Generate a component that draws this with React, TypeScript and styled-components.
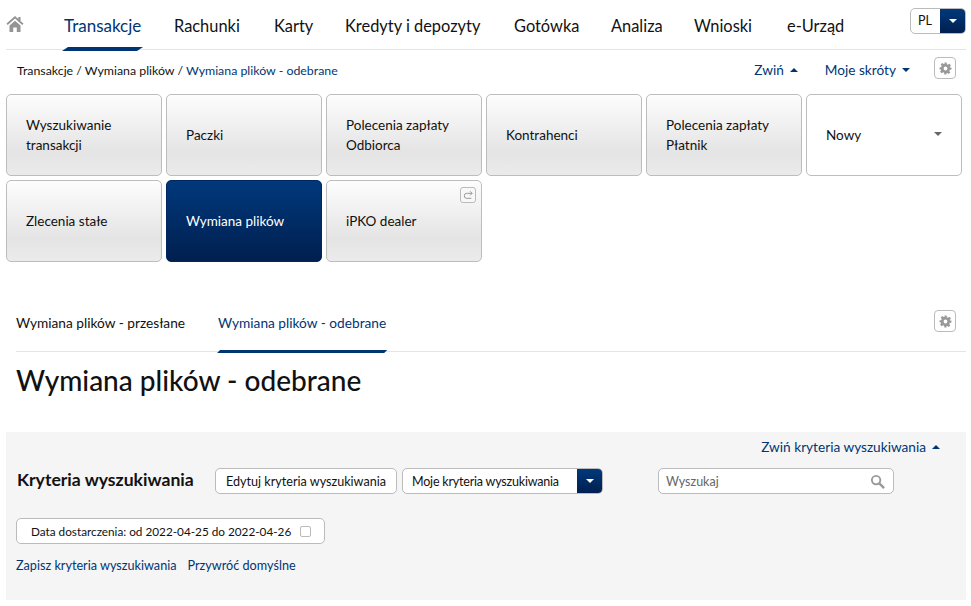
import React from "react";
import styled, { createGlobalStyle } from "styled-components";

const Global = createGlobalStyle`
  html, body { margin: 0; padding: 0; background: #fff; }
  body { font-family: "Lato", "Open Sans", sans-serif; color: #111; overflow: hidden; }
  * { box-sizing: border-box; }
`;

const blue = "#003574";
const navy = "linear-gradient(#00397c, #001f4f)";

const Page = styled.div`
  width: 971px;
  height: 606px;
  padding: 0 5px 0 6px;
  overflow: hidden;
`;
const TopBar = styled.header`
  height: 50px;
  display: flex;
  border-bottom: 1px solid #e5e5e5;
  position: relative;
`;
const HomeLink = styled.div`
  width: 58px;
  padding-top: 15px;
  color: #949494;
`;
const Nav = styled.nav`
  display: flex;
  gap: 33px;
  flex: 1;
`;
const NavItem = styled.a<{ $active?: boolean; $w: number }>`
  position: relative;
  width: ${(p) => p.$w}px;
  font-size: ${(p) => (p.$active ? 17 : 16.4)}px;
  line-height: 20px;
  padding-top: 16px;
  height: 50px;
  color: ${(p) => (p.$active ? blue : "#111")};
  white-space: nowrap;
  ${(p) =>
    p.$active &&
    `&::after{content:"";position:absolute;left:-2px;right:-2px;bottom:-1px;height:4px;background:${blue};clip-path:polygon(6px 0,100% 0,calc(100% - 6px) 100%,0 100%);}`}
`;
const LangBox = styled.div`
  position: absolute;
  right: 0;
  top: 8px;
  width: 56px;
  height: 26px;
  border: 1px solid #bbb;
  border-radius: 5px;
  display: flex;
  overflow: hidden;
  font-size: 12.5px;
`;
const LangValue = styled.span`
  flex: 1;
  padding-left: 7px;
  line-height: 24px;
`;
const Drop = styled.span<{ $w: number }>`
  width: ${(p) => p.$w}px;
  background: ${navy};
  display: flex;
  align-items: center;
  justify-content: center;
  flex: none;
  &::after {
    content: "";
    border: 4px solid transparent;
    border-top: 4px solid #fff;
    border-bottom: 0;
  }
`;
const CrumbRow = styled.div`
  height: 44px;
  display: flex;
  align-items: center;
  padding: 0 10px 4px 11px;
  font-size: 12.35px;
`;
const Crumbs = styled.div`
  flex: 1;
`;
const CrumbCurrent = styled.span`
  color: ${blue};
`;
const Toggle = styled.a<{ $gap?: number }>`
  color: ${blue};
  font-size: 13.65px;
  display: inline-flex;
  align-items: center;
  gap: 6px;
  margin-right: ${(p) => p.$gap ?? 0}px;
  white-space: nowrap;
`;
const Caret = styled.span<{ $up?: boolean }>`
  width: 0;
  height: 0;
  border: 4px solid transparent;
  ${(p) => (p.$up ? `border-bottom: 4px solid ${blue}; border-top: 0;` : `border-top: 4px solid ${blue}; border-bottom: 0;`)}
`;
const GearButton = styled.span`
  width: 22px;
  height: 22px;
  border: 1px solid #bbb;
  border-radius: 4px;
  display: flex;
  align-items: center;
  justify-content: center;
  color: #999;
  margin-top: -4px;
`;
const Tiles = styled.div`
  display: grid;
  grid-template-columns: repeat(6, 156px);
  grid-auto-rows: 82px;
  gap: 4px;
`;
const Tile = styled.a<{ $variant?: "active" | "plain" }>`
  position: relative;
  border: 1px solid ${(p) => (p.$variant === "active" ? "#00275f" : "#bdbdbd")};
  border-radius: 5px;
  padding: 0 19px;
  display: flex;
  align-items: center;
  font-size: 13.5px;
  line-height: 20px;
  color: ${(p) => (p.$variant === "active" ? "#fff" : "#111")};
  background: ${(p) =>
    p.$variant === "active"
      ? navy
      : p.$variant === "plain"
      ? "#fff"
      : "linear-gradient(#fdfdfd, #e4e4e4 72%, #ebebeb)"};
`;
const TileCaret = styled.span`
  position: absolute;
  right: 19px;
  top: 37px;
  border: 4px solid transparent;
  border-top: 4px solid #666;
  border-bottom: 0;
`;
const ExternalBadge = styled.span`
  position: absolute;
  right: 5px;
  top: 6px;
  width: 16px;
  height: 16px;
  border: 1px solid #bbb;
  border-radius: 3px;
  display: flex;
  align-items: center;
  justify-content: center;
  color: #999;
  background: #f8f8f8;
`;
const TabBar = styled.div`
  margin: 38px 0 0 10px;
  height: 52px;
  display: flex;
  gap: 33px;
  border-bottom: 1px solid #e5e5e5;
  position: relative;
`;
const Tab = styled.a<{ $active?: boolean }>`
  position: relative;
  font-size: 13.7px;
  line-height: 18px;
  padding-top: 14px;
  white-space: nowrap;
  color: ${(p) => (p.$active ? blue : "#111")};
  ${(p) =>
    p.$active &&
    `&::after{content:"";position:absolute;left:-1px;right:-1px;bottom:-2px;height:3px;background:${blue};clip-path:polygon(3px 0,100% 0,calc(100% - 3px) 100%,0 100%);}`}
`;
const TabGear = styled(GearButton)`
  position: absolute;
  right: 10px;
  top: 10px;
  margin-top: 0;
`;
const Title = styled.h1`
  margin: 10px 0 0 10px;
  font-size: 28px;
  line-height: 36px;
  font-weight: 500;
`;
const Panel = styled.section`
  margin-top: 34px;
  height: 168px;
  background: #f5f5f5;
  padding: 0 26px 0 10px;
  display: flex;
  flex-direction: column;
`;
const PanelTop = styled.div`
  height: 30px;
  display: flex;
  justify-content: flex-end;
  align-items: center;
`;
const CriteriaRow = styled.div`
  display: flex;
  align-items: center;
  margin-top: 5px;
  height: 27px;
`;
const CriteriaTitle = styled.h2`
  margin: -2px 20px 0 1px;
  width: 178px;
  font-size: 17.6px;
  font-weight: 700;
  white-space: nowrap;
`;
const Btn = styled.a`
  height: 26px;
  width: 182px;
  border: 1px solid #bbb;
  border-radius: 5px;
  background: #fff;
  font-size: 12.6px;
  line-height: 25px;
  text-align: center;
  white-space: nowrap;
  margin-right: 5px;
`;
const SelectBox = styled.div`
  width: 201px;
  height: 26px;
  border: 1px solid #bbb;
  border-radius: 5px;
  background: #fff;
  display: flex;
  overflow: hidden;
  font-size: 12.5px;
  line-height: 25px;
  margin-right: 55px;
`;
const SelectText = styled.span`
  flex: 1;
  padding-left: 9px;
  white-space: nowrap;
  letter-spacing: -0.2px;
`;
const Search = styled.div`
  width: 236px;
  height: 26px;
  border: 1px solid #bbb;
  border-radius: 5px;
  background: #fff;
  display: flex;
  align-items: center;
  justify-content: space-between;
  padding: 1px 8px 0 7px;
  font-size: 12.5px;
  color: #666;
`;
const FilterChip = styled.div`
  margin-top: 24px;
  width: 309px;
  height: 26px;
  border: 1px solid #bbb;
  border-radius: 5px;
  background: #fff;
  display: flex;
  align-items: center;
  padding-left: 14px;
  font-size: 11.75px;
  white-space: nowrap;
`;
const ChipBox = styled.span`
  margin-left: 9px;
  width: 11px;
  height: 11px;
  border: 1px solid #bbb;
  border-radius: 2px;
  background: #fff;
`;
const Links = styled.div`
  display: flex;
  gap: 11px;
  margin-top: 13px;
  font-size: 12.65px;
  line-height: 18px;
`;
const TextLink = styled.a`
  color: ${blue};
`;

const Gear = () => (
  <svg width="13" height="13" viewBox="0 0 24 24" fill="currentColor">
    <path d="M10 1h4l.6 3.2 1.9.8 2.7-1.8 2.8 2.8-1.8 2.7.8 1.9L23 10v4l-3.2.6-.8 1.9 1.8 2.7-2.8 2.8-2.7-1.8-1.9.8L14 23h-4l-.6-3.2-1.9-.8-2.7 1.8-2.8-2.8 1.8-2.7-.8-1.9L1 14v-4l3.2-.6.8-1.9-1.8-2.7 2.8-2.8 2.7 1.8 1.9-.8zM12 8.5a3.5 3.5 0 100 7 3.5 3.5 0 000-7z" fillRule="evenodd" />
  </svg>
);

const navItems: [string, number][] = [
  ["Transakcje", 77],
  ["Rachunki", 67],
  ["Karty", 38],
  ["Kredyty i depozyty", 136],
  ["Gotówka", 64],
  ["Analiza", 50],
  ["Wnioski", 60],
  ["e-Urząd", 56],
];

export default function App() {
  return (
    <>
      <Global />
      <Page>
        <TopBar>
          <HomeLink>
            <svg width="18" height="18" viewBox="0 0 18 18" fill="currentColor">
              <path d="M9 1 0.5 8.6l1.2 1.3L9 3.5l7.3 6.4 1.2-1.3L14.5 6V2h-2.2v2.1z" />
              <path d="M3.5 10.5 9 5.7l5.5 4.8V17h-3.7v-4.5H7.2V17H3.5z" />
            </svg>
          </HomeLink>
          <Nav>
            {navItems.map(([n, w], i) => (
              <NavItem key={n} $w={w} $active={i === 0}>{n}</NavItem>
            ))}
          </Nav>
          <LangBox>
            <LangValue>PL</LangValue>
            <Drop $w={25} />
          </LangBox>
        </TopBar>
        <CrumbRow>
          <Crumbs>
            Transakcje / Wymiana plików / <CrumbCurrent>Wymiana plików - odebrane</CrumbCurrent>
          </Crumbs>
          <Toggle $gap={27}>Zwiń <Caret $up /></Toggle>
          <Toggle $gap={24}>Moje skróty <Caret /></Toggle>
          <GearButton><Gear /></GearButton>
        </CrumbRow>
        <Tiles>
          <Tile>Wyszukiwanie<br />transakcji</Tile>
          <Tile>Paczki</Tile>
          <Tile>Polecenia zapłaty<br />Odbiorca</Tile>
          <Tile>Kontrahenci</Tile>
          <Tile>Polecenia zapłaty<br />Płatnik</Tile>
          <Tile $variant="plain">Nowy<TileCaret /></Tile>
          <Tile>Zlecenia stałe</Tile>
          <Tile $variant="active">Wymiana plików</Tile>
          <Tile>
            iPKO dealer
            <ExternalBadge>
              <svg width="10" height="10" viewBox="0 0 12 12" fill="none" stroke="currentColor" strokeWidth="1.2">
                <path d="M11 4H4.5A3 3 0 0 0 1.5 7v0a3 3 0 0 0 3 3H10M8.5 1.5 11 4 8.5 6.5" />
              </svg>
            </ExternalBadge>
          </Tile>
        </Tiles>
        <TabBar>
          <Tab>Wymiana plików - przesłane</Tab>
          <Tab $active>Wymiana plików - odebrane</Tab>
          <TabGear><Gear /></TabGear>
        </TabBar>
        <Title>Wymiana plików - odebrane</Title>
        <Panel>
          <PanelTop>
            <Toggle>Zwiń kryteria wyszukiwania <Caret $up /></Toggle>
          </PanelTop>
          <CriteriaRow>
            <CriteriaTitle>Kryteria wyszukiwania</CriteriaTitle>
            <Btn>Edytuj kryteria wyszukiwania</Btn>
            <SelectBox>
              <SelectText>Moje kryteria wyszukiwania</SelectText>
              <Drop $w={25} />
            </SelectBox>
            <Search>
              Wyszukaj
              <svg width="15" height="15" viewBox="0 0 16 16" fill="none" stroke="#999" strokeWidth="2">
                <circle cx="6.5" cy="6.5" r="4.5" />
                <path d="M10 10l5 5" strokeWidth="2.6" />
              </svg>
            </Search>
          </CriteriaRow>
          <FilterChip>
            Data dostarczenia: od 2022-04-25 do 2022-04-26
            <ChipBox />
          </FilterChip>
          <Links>
            <TextLink>Zapisz kryteria wyszukiwania</TextLink>
            <TextLink>Przywróć domyślne</TextLink>
          </Links>
        </Panel>
      </Page>
    </>
  );
}
